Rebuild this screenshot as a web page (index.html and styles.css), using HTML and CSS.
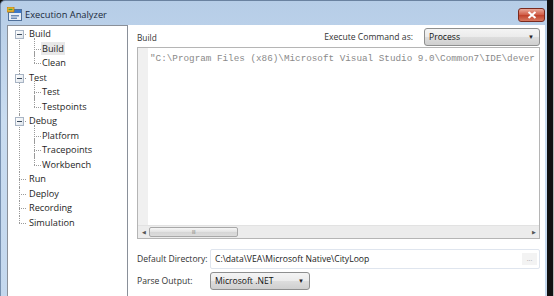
FILE: index.html
```html
<!DOCTYPE html>
<html lang="en">
<head>
  <meta charset="UTF-8" />
  <title>Execution Analyzer</title>
  <link rel="stylesheet" href="styles.css">
</head>
<body>

<div class="window">
  <div class="titlebar">
    <svg class="app-icon" width="15" height="14" viewBox="0 0 15 14">
      <rect x="1.5" y="2.5" width="13" height="11" fill="#e8eef6" stroke="#50709a"/>
      <rect x="2" y="3" width="12" height="3" fill="#3c78c8"/>
      <rect x="4" y="8" width="8" height="1.5" fill="#6c8cb8"/>
      <rect x="4" y="10.5" width="6" height="1.5" fill="#6c8cb8"/>
      <path d="M0 0 H7 V5 H0 Z" fill="#f2b632" stroke="#b07a10" stroke-width="0.8"/>
      <path d="M1.5 2.5 H5.5" stroke="#3aa040" stroke-width="1.4"/>
    </svg>
    <span class="title">Execution Analyzer</span>
    <div class="close-btn">
      <svg width="10" height="8" viewBox="0 0 10 8">
        <path d="M1.5 1 L8.5 7 M8.5 1 L1.5 7" stroke="#fff" stroke-width="2"/>
      </svg>
    </div>
  </div>

  <div class="client">
    <div class="tree-panel">
      <ul class="tree">
        <li class="open"><span class="toggle"></span><span class="label">Build</span>
          <ul>
            <li><span class="label selected">Build</span></li>
            <li><span class="label">Clean</span></li>
          </ul>
        </li>
        <li class="open"><span class="toggle"></span><span class="label">Test</span>
          <ul>
            <li><span class="label">Test</span></li>
            <li><span class="label">Testpoints</span></li>
          </ul>
        </li>
        <li class="open"><span class="toggle"></span><span class="label">Debug</span>
          <ul>
            <li><span class="label">Platform</span></li>
            <li><span class="label">Tracepoints</span></li>
            <li><span class="label">Workbench</span></li>
          </ul>
        </li>
        <li><span class="label">Run</span></li>
        <li><span class="label">Deploy</span></li>
        <li><span class="label">Recording</span></li>
        <li><span class="label">Simulation</span></li>
      </ul>
    </div>

    <div class="settings">
      <div class="row-top">
        <span class="section">Build</span>
        <span class="field-label exec-label">Execute Command as:</span>
        <div class="combo combo-process">
          <span>Process</span>
          <span class="arrow">&#9660;</span>
        </div>
      </div>

      <div class="command-box">
        <div class="command-body">
          <div class="gutter"></div>
          <div class="command-text">"C:\Program Files (x86)\Microsoft Visual Studio 9.0\Common7\IDE\dever</div>
        </div>
        <div class="hscroll">
          <span class="scroll-arrow">&#9664;</span>
          <div class="track">
            <div class="thumb"><span class="grip">III</span></div>
          </div>
          <span class="scroll-arrow">&#9654;</span>
        </div>
      </div>

      <div class="form-row dir-row">
        <span class="field-label">Default Directory:</span>
        <div class="text-input">
          <span>C:\data\VEA\Microsoft Native\CityLoop</span>
          <span class="browse">...</span>
        </div>
      </div>

      <div class="form-row parse-row">
        <span class="field-label">Parse Output:</span>
        <div class="combo combo-parse">
          <span>Microsoft .NET</span>
          <span class="arrow">&#9660;</span>
        </div>
      </div>
    </div>
  </div>
</div>

</body>
</html>
```

FILE: styles.css
```css
* { box-sizing: border-box; }

body {
  margin: 0;
  width: 554px;
  height: 296px;
  overflow: hidden;
  background: linear-gradient(to right, #111 553px, #b8b8b8 553px);
  font-family: "Open Sans", "Noto Sans", sans-serif;
  font-size: 9.2px;
  color: #1e1e1e;
}

.window {
  width: 547px;
  height: 296px;
  display: flex;
  flex-direction: column;
  background: linear-gradient(to bottom, #b6cde7, #c9dcf0 120px, #c4d8ee);
  border-left: 1px solid #7891b0;
  border-top: 1px solid #6a82a0;
  border-top-left-radius: 5px;
  padding: 0 2px 0 6px;
}

/* title bar */
.titlebar {
  height: 24px;
  display: flex;
  align-items: center;
  padding: 2px 0 0 0;
}

.app-icon {
  margin-right: 3px;
}

.title {
  flex: 1;
  font-size: 9.3px;
  color: #1b2a3c;
}

.close-btn {
  width: 27px;
  height: 14px;
  margin-top: 1px;
  display: flex;
  justify-content: center;
  align-items: center;
  border: 1px solid #7a2a1e;
  border-radius: 3px;
  background: linear-gradient(to bottom, #e9a99a, #d05a44 50%, #c0402a 51%, #d87860);
}

/* client area */
.client {
  flex: 1;
  display: flex;
  background: #fff;
  min-height: 0;
  min-width: 0;
}

.tree-panel {
  width: 121px;
  flex-shrink: 0;
  border: 1px solid #8a9099;
  border-bottom: none;
  background: #fff;
}

.tree, .tree ul {
  list-style: none;
  margin: 0;
  padding: 0;
}

.tree {
  padding-top: 1px;
}

.tree li {
  position: relative;
  line-height: 14.5px;
}

.tree > li {
  padding-left: 20px;
}

.tree > li::before {
  content: '';
  position: absolute;
  left: 11px;
  top: 7px;
  width: 7px;
  border-top: 1px dotted #9a9a9a;
}

.tree > li::after {
  content: '';
  position: absolute;
  left: 11px;
  top: 0;
  bottom: 0;
  border-left: 1px dotted #9a9a9a;
}

.tree > li:first-child::after {
  top: 7px;
}

.tree > li:last-child::after {
  bottom: auto;
  height: 7px;
}

.tree ul li {
  padding-left: 13px;
}

.tree ul li::before {
  content: '';
  position: absolute;
  left: 6px;
  top: 7px;
  width: 7px;
  border-top: 1px dotted #9a9a9a;
}

.tree ul li::after {
  content: '';
  position: absolute;
  left: 6px;
  top: -4px;
  bottom: 0;
  border-left: 1px dotted #9a9a9a;
}

.tree ul li:last-child::after {
  bottom: auto;
  height: 11px;
}

.toggle {
  position: absolute;
  left: 7px;
  top: 3px;
  width: 9px;
  height: 9px;
  border: 1px solid #a8b4c4;
  background: linear-gradient(to bottom right, #fff, #dfe5ec);
  z-index: 1;
}

.toggle::after {
  content: '';
  position: absolute;
  left: 1px;
  top: 3px;
  width: 5px;
  border-top: 1px solid #3a4a5c;
}

.label {
  padding: 0 1px;
}

.label.selected {
  background: #e8e8e8;
}

/* right side */
.settings {
  flex: 1;
  min-width: 0;
  display: flex;
  flex-direction: column;
  padding: 1px 5px 0 9px;
  font-size: 8.6px;
}

.row-top {
  height: 20px;
  display: flex;
  align-items: center;
  margin-top: 1px;
}

.section {
  flex: 1;
  font-size: 8.3px;
  color: #333;
}

.exec-label {
  margin-right: 11px;
}

.field-label {
  color: #333;
  white-space: nowrap;
}

.combo {
  height: 18px;
  flex-shrink: 0;
  display: flex;
  align-items: center;
  padding: 0 5px 0 4px;
  border: 1px solid #8e8f8f;
  border-radius: 3px;
  background: linear-gradient(to bottom, #f4f4f4, #ebebeb 50%, #dddddd 51%, #cfcfcf);
  color: #111;
}

.combo span:first-child {
  flex: 1;
}

.combo .arrow {
  font-size: 6px;
  color: #222;
}

.combo-process {
  width: 116px;
}

.combo-parse {
  width: 100px;
}

/* command text box */
.command-box {
  height: 192px;
  min-width: 0;
  display: flex;
  flex-direction: column;
  border: 1px solid #b5b5b5;
  background: #fff;
}

.command-body {
  flex: 1;
  display: flex;
  min-height: 0;
  min-width: 0;
}

.gutter {
  width: 10px;
  flex-shrink: 0;
  background: #f0f0f0;
}

.command-text {
  flex: 1;
  min-width: 0;
  overflow: hidden;
  white-space: nowrap;
  padding: 5px 0 0 2px;
  font-family: "Liberation Mono", "DejaVu Sans Mono", monospace;
  font-size: 9.3px;
  color: #8a8a8a;
}

.hscroll {
  height: 13px;
  display: flex;
  align-items: center;
  background: #ececec;
  border-top: 1px solid #e2e2e2;
}

.scroll-arrow {
  width: 11px;
  text-align: center;
  font-size: 5px;
  color: #555;
}

.track {
  flex: 1;
  height: 100%;
  padding: 1px 0;
}

.thumb {
  width: 89px;
  height: 100%;
  display: flex;
  justify-content: center;
  align-items: center;
  border: 1px solid #a8a8a8;
  border-radius: 2px;
  background: linear-gradient(to bottom, #f6f6f6, #e2e2e2 50%, #d6d6d6 51%, #dcdcdc);
}

.grip {
  font-size: 6px;
  letter-spacing: -0.5px;
  color: #888;
  line-height: 1;
}

/* form rows */
.form-row {
  display: flex;
  align-items: center;
}

.form-row .field-label {
  width: 73px;
  flex-shrink: 0;
}

.dir-row {
  margin-top: 10px;
  height: 20px;
}

.parse-row {
  margin-top: 2px;
  height: 19px;
}

.text-input {
  flex: 1;
  min-width: 0;
  height: 20px;
  display: flex;
  align-items: center;
  padding: 0 2px 0 4px;
  border: 1px solid #dfe5ee;
  border-radius: 2px;
  color: #222;
}

.text-input span:first-child {
  flex: 1;
}

.browse {
  width: 15px;
  height: 12px;
  display: flex;
  justify-content: center;
  align-items: flex-end;
  background: #f3f3f3;
  color: #aaa;
  font-size: 7px;
  line-height: 1;
  padding-bottom: 3px;
}
```
